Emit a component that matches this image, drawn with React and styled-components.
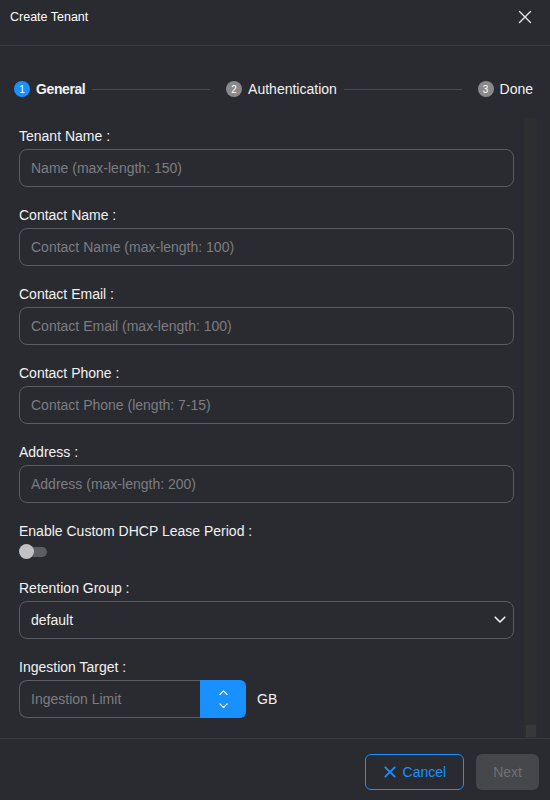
import React from "react";
import styled, { createGlobalStyle } from "styled-components";

const GlobalStyle = createGlobalStyle`
  * { box-sizing: border-box; }
  html, body {
    margin: 0;
    padding: 0;
    background: #2a2b30;
    font-family: "Liberation Sans", Arial, sans-serif;
  }
`;

const Modal = styled.div`
  width: 550px;
  height: 800px;
  display: flex;
  flex-direction: column;
  background: #2a2b30;
  color: #f2f2f2;
`;

const Header = styled.div`
  height: 46px;
  flex-shrink: 0;
  display: flex;
  justify-content: space-between;
  align-items: flex-start;
  padding: 10px 18px 0 10px;
  border-bottom: 1px solid #37383d;
`;

const HeaderTitle = styled.div`
  font-size: 12.5px;
  line-height: 14px;
  color: #ffffff;
`;

const CloseButton = styled.button`
  width: 14px;
  height: 14px;
  padding: 0;
  border: none;
  background: transparent;
  color: #e6e6e6;
  cursor: pointer;
  display: flex;
`;

const Stepper = styled.div`
  flex-shrink: 0;
  display: flex;
  align-items: center;
  height: 20px;
  margin: 33px 17px 19px 14px;
`;

const Step = styled.div`
  display: flex;
  align-items: center;
  gap: 6px;
  font-size: 14px;
  color: #f2f2f2;
  font-weight: ${(p) => (p.active ? 700 : 400)};
  letter-spacing: ${(p) => (p.active ? "-0.4px" : "0")};
`;

const StepDot = styled.span`
  width: 16px;
  height: 16px;
  border-radius: 50%;
  display: flex;
  align-items: center;
  justify-content: center;
  font-size: 10px;
  font-weight: 400;
  letter-spacing: 0;
  color: #ffffff;
  background: ${(p) => (p.active ? "#1890ff" : "#8a8a8c")};
`;

const StepLine = styled.div`
  flex: 1;
  height: 1px;
  background: #4a4b50;
  margin: 0 16px 0 7px;
`;

const Body = styled.div`
  flex: 1;
  min-height: 0;
  display: flex;
  padding-right: 13px;
`;

const Content = styled.div`
  flex: 1;
  overflow: hidden;
  padding: 10px 10px 20px 19px;
`;

const ScrollTrack = styled.div`
  width: 13px;
  flex-shrink: 0;
  background: #2e2e30;
  display: flex;
  flex-direction: column;
  justify-content: flex-end;
`;

const ScrollThumb = styled.div`
  margin: 0 1px 1px 2px;
  height: 12px;
  background: #38383a;
`;

const Field = styled.div`
  display: flex;
  flex-direction: column;
  margin-bottom: ${(p) => (p.last ? 0 : 20)}px;
`;

const Label = styled.label`
  font-size: 14px;
  line-height: 16px;
  color: #f2f2f2;
  margin-bottom: 5px;
`;

const Input = styled.input`
  width: 100%;
  min-width: 0;
  height: 38px;
  padding: 0 11px;
  border: 1px solid #5b5c61;
  border-radius: 8px;
  background: transparent;
  color: #f2f2f2;
  font-family: inherit;
  font-size: 14px;
  outline: none;

  &::placeholder {
    color: #7c7d82;
  }
`;

const Switch = styled.div`
  position: relative;
  width: 28px;
  height: 16px;
  display: flex;
  align-items: center;
`;

const SwitchTrack = styled.div`
  margin-left: 3px;
  width: 25px;
  height: 10px;
  border-radius: 5px;
  background: #5d5e63;
`;

const SwitchKnob = styled.div`
  position: absolute;
  left: 0;
  top: 0;
  width: 15px;
  height: 15px;
  border-radius: 50%;
  background: #c2c2c4;
`;

const Select = styled.div`
  height: 38px;
  display: flex;
  align-items: center;
  justify-content: space-between;
  padding: 0 7px 0 11px;
  border: 1px solid #5b5c61;
  border-radius: 8px;
  font-size: 14px;
  color: #f2f2f2;
`;

const NumberRow = styled.div`
  display: flex;
  align-items: center;
  gap: 11px;
`;

const NumberBox = styled.div`
  width: 227px;
  height: 38px;
  display: flex;
`;

const NumberInput = styled(Input)`
  flex: 1;
  width: auto;
  border-radius: 8px 0 0 8px;
  border-right: none;
`;

const Spinner = styled.div`
  width: 46px;
  flex-shrink: 0;
  height: 38px;
  background: #1890ff;
  border-radius: 0 6px 6px 0;
  display: flex;
  flex-direction: column;
  align-items: center;
  justify-content: center;
  gap: 7px;
  color: #ffffff;
`;

const Unit = styled.span`
  font-size: 14px;
  color: #f2f2f2;
`;

const Footer = styled.div`
  height: 62px;
  flex-shrink: 0;
  display: flex;
  justify-content: flex-end;
  align-items: flex-start;
  gap: 12px;
  padding: 15px 11px 0 0;
  border-top: 1px solid #37383d;
`;

const Button = styled.button`
  height: 36px;
  padding: ${(p) => (p.outline ? "0 17px 0 18px" : "0 16px")};
  border-radius: 6px;
  font-family: inherit;
  font-size: 14px;
  display: flex;
  align-items: center;
  gap: 7px;
  cursor: pointer;
  border: 1px solid ${(p) => (p.outline ? "#1890ff" : "transparent")};
  background: ${(p) => (p.outline ? "transparent" : "#46474b")};
  color: ${(p) => (p.outline ? "#1890ff" : "#707175")};
`;

const Chevron = ({ up, size = 10 }) => (
  <svg width={size} height={size * 0.6} viewBox="0 0 10 6" fill="none">
    <path
      d={up ? "M1 5L5 1L9 5" : "M1 1L5 5L9 1"}
      stroke="currentColor"
      strokeWidth="1.3"
      strokeLinecap="round"
      strokeLinejoin="round"
    />
  </svg>
);

const XIcon = ({ size = 14, width = 1.4 }) => (
  <svg width={size} height={size} viewBox="0 0 14 14" fill="none">
    <path d="M1.5 1.5L12.5 12.5M12.5 1.5L1.5 12.5" stroke="currentColor" strokeWidth={width} strokeLinecap="round" />
  </svg>
);

const fields = [
  { label: "Tenant Name :", placeholder: "Name (max-length: 150)" },
  { label: "Contact Name :", placeholder: "Contact Name (max-length: 100)" },
  { label: "Contact Email :", placeholder: "Contact Email (max-length: 100)" },
  { label: "Contact Phone :", placeholder: "Contact Phone (length: 7-15)" },
  { label: "Address :", placeholder: "Address (max-length: 200)" },
];

export default function App() {
  return (
    <>
      <GlobalStyle />
      <Modal>
        <Header>
          <HeaderTitle>Create Tenant</HeaderTitle>
          <CloseButton aria-label="Close">
            <XIcon />
          </CloseButton>
        </Header>

        <Stepper>
          <Step active>
            <StepDot active>1</StepDot>
            General
          </Step>
          <StepLine />
          <Step>
            <StepDot>2</StepDot>
            Authentication
          </Step>
          <StepLine />
          <Step>
            <StepDot>3</StepDot>
            Done
          </Step>
        </Stepper>

        <Body>
          <Content>
            {fields.map((f) => (
              <Field key={f.label}>
                <Label>{f.label}</Label>
                <Input placeholder={f.placeholder} />
              </Field>
            ))}

            <Field>
              <Label>Enable Custom DHCP Lease Period :</Label>
              <Switch>
                <SwitchTrack />
                <SwitchKnob />
              </Switch>
            </Field>

            <Field>
              <Label>Retention Group :</Label>
              <Select>
                default
                <Chevron size={12} />
              </Select>
            </Field>

            <Field last>
              <Label>Ingestion Target :</Label>
              <NumberRow>
                <NumberBox>
                  <NumberInput placeholder="Ingestion Limit" />
                  <Spinner>
                    <Chevron up size={9} />
                    <Chevron size={9} />
                  </Spinner>
                </NumberBox>
                <Unit>GB</Unit>
              </NumberRow>
            </Field>
          </Content>
          <ScrollTrack>
            <ScrollThumb />
          </ScrollTrack>
        </Body>

        <Footer>
          <Button outline>
            <XIcon size={12} width={2.1} />
            Cancel
          </Button>
          <Button>Next</Button>
        </Footer>
      </Modal>
    </>
  );
}
